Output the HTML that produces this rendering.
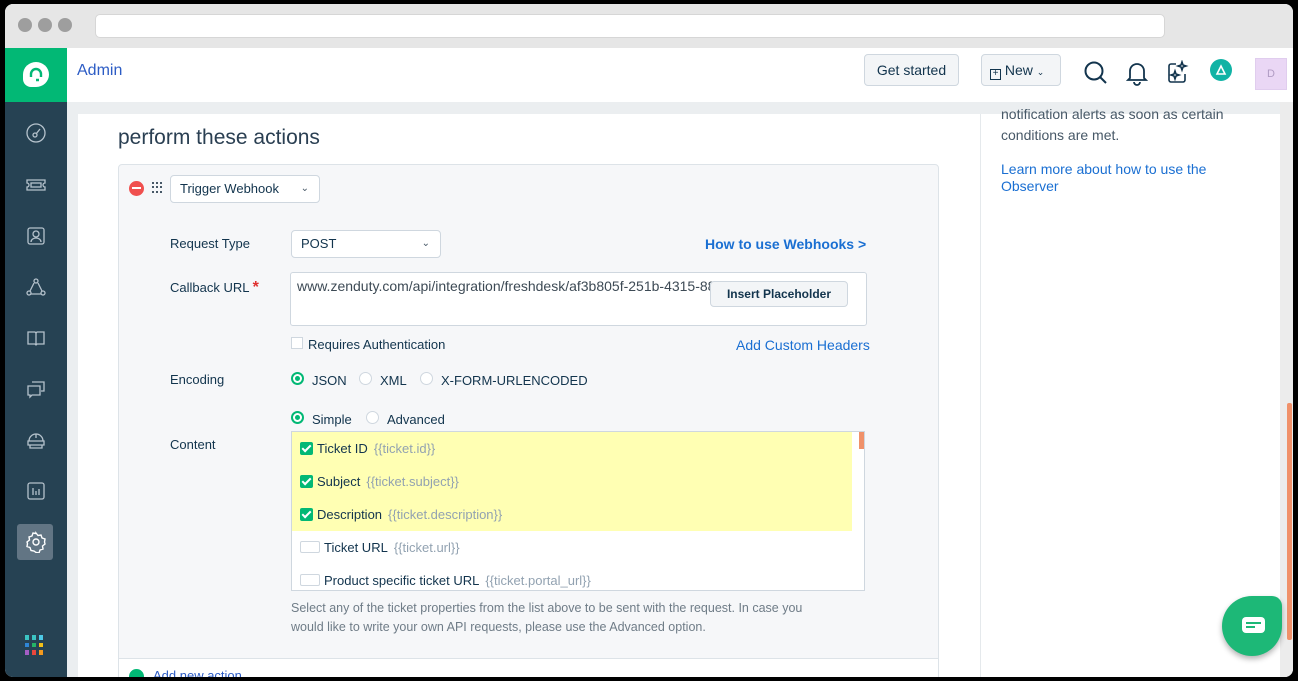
<!DOCTYPE html>
<html><head><meta charset="utf-8"><style>
*{box-sizing:border-box;margin:0;padding:0}
body{width:1298px;height:681px;background:#000;font-family:"Liberation Sans",sans-serif;position:relative;overflow:hidden;color:#12344d}
.win{position:absolute;left:5px;top:4px;width:1288px;height:673px;background:#ebeef0;border-radius:8px;overflow:hidden}
.chrome{position:absolute;left:0;top:0;width:100%;height:44px;background:#e6e6e6}
.dot{position:absolute;top:14px;width:14px;height:14px;border-radius:50%;background:#9e9e9e}
.url{position:absolute;left:90px;top:10px;width:1070px;height:24px;background:#fff;border-radius:5px;border:1px solid #d6d6d6}
.hdr{position:absolute;left:0;top:44px;width:100%;height:54px;background:#fff}
.logo{position:absolute;left:0;top:44px;width:62px;height:54px;background:#02b875}
.side{position:absolute;left:0;top:98px;width:62px;height:580px;background:#264253}
.si{position:absolute;left:20px;width:22px;height:22px}
.btn{position:absolute;border:1px solid #cfd7df;border-radius:4px;background:#f3f5f7;font-size:14px;color:#12344d}
.card{position:absolute;left:73px;top:110px;width:902px;height:570px;background:#fff}
.rp{position:absolute;left:975px;top:110px;width:301px;height:570px;background:#fff;border-left:1px solid #e5e9ec}
.box{position:absolute;left:113px;top:160px;width:821px;height:520px;background:#f6f7f9;border:1px solid #dde3e8;border-radius:4px}
.lbl{position:absolute;font-size:13px;color:#12344d}
.sel{position:absolute;background:#fff;border:1px solid #cfd7df;border-radius:4px;font-size:13px}
.radio{position:absolute;width:13px;height:13px;border-radius:50%;border:1px solid #cfd7df;background:#fff}
.radio.on{border:2px solid #02b875}
.radio.on::after{content:"";position:absolute;left:2px;top:2px;width:5px;height:5px;border-radius:50%;background:#02b875}
.cb{position:absolute;width:13px;height:13px;border-radius:2px;background:#02b875}
.cb::after{content:"";position:absolute;left:4px;top:1px;width:3px;height:7px;border:solid #fff;border-width:0 2px 2px 0;transform:rotate(45deg)}
.ub{position:absolute;width:20px;height:12px;border:1px solid #cfd7df;background:#fff;border-radius:2px}
.it{position:absolute;font-size:13px;color:#12344d}
.it span{color:#92a2b1;margin-left:6px}
.dots{position:absolute;left:33px;top:17px;width:11px;height:11px;display:grid;grid-template-columns:repeat(3,2px);gap:2px}
.dots i{width:2px;height:2px;background:#475867}
</style></head><body>
<div class="win">
<div class="chrome"><div class="dot" style="left:13px"></div><div class="dot" style="left:33px"></div><div class="dot" style="left:53px"></div><div class="url"></div></div>
<div class="hdr">
<div style="position:absolute;left:72px;top:14px;font-size:16px;color:#2c5cc5">Admin</div>
<div class="btn" style="left:859px;top:6px;width:95px;height:32px;line-height:30px;text-align:center">Get started</div>
<div class="btn" style="left:976px;top:6px;width:80px;height:32px;line-height:30px;padding-left:8px"><span style="display:inline-block;width:11px;height:11px;border:1px solid #12344d;font-size:10px;line-height:8px;text-align:center;vertical-align:-1px">+</span> New <span style="font-size:9px">⌄</span></div>
<svg style="position:absolute;left:1078px;top:12px" width="26" height="26" viewBox="0 0 26 26" fill="none" stroke="#12344d" stroke-width="2"><circle cx="11" cy="11" r="8.5"/><path d="M17 17l6 6"/></svg>
<svg style="position:absolute;left:1121px;top:12px" width="22" height="26" viewBox="0 0 22 26" fill="none" stroke="#12344d" stroke-width="1.8"><path d="M4 18V11a7 7 0 0114 0v7l2 2H2z"/><path d="M8 22a3 3 0 006 0"/></svg>
<svg style="position:absolute;left:1161px;top:12px" width="24" height="26" viewBox="0 0 24 26" fill="none" stroke="#12344d" stroke-width="1.6"><path d="M10 4H5a2 2 0 00-2 2v14a2 2 0 002 2h12a2 2 0 002-2v-6"/><path d="M16 2l1 3 3 1-3 1-1 3-1-3-3-1 3-1z"/><path d="M9 11l1 3 3 1-3 1-1 3-1-3-3-1 3-1z"/></svg>
<div style="position:absolute;left:1205px;top:11px;width:22px;height:22px;border-radius:50%;background:#10b3a5"></div>
<svg style="position:absolute;left:1208px;top:14px" width="16" height="16" viewBox="0 0 16 16" fill="none" stroke="#fff" stroke-width="1.6"><path d="M8 4L4 12h8z"/></svg>
<div style="position:absolute;left:1250px;top:10px;width:32px;height:32px;background:#ead7f5;border:1px solid #e0cdee;color:#b19cc4;font-size:11px;text-align:center;line-height:30px">D</div>
</div>
<div class="logo"><div style="position:absolute;left:18px;top:14px;width:26px;height:25px;background:#fff;border-radius:50% 50% 50% 8px / 50% 50% 50% 8px"></div>
<svg style="position:absolute;left:22px;top:17px" width="18" height="18" viewBox="0 0 18 18" fill="none" stroke="#02b875" stroke-width="2.4"><path d="M4 12V9a5 5 0 0110 0v3"/><path d="M9 15h3"/></svg></div>
<div class="side">
<svg class="si" style="top:20px" viewBox="0 0 22 22" fill="none" stroke="#b5c2cc" stroke-width="1.3"><circle cx="11" cy="11" r="9"/><circle cx="10" cy="13" r="2"/><path d="M11 12l4-5"/></svg>
<svg class="si" style="top:72px" viewBox="0 0 22 22" fill="none" stroke="#b5c2cc" stroke-width="1.3"><path d="M2 6h18v3a2 2 0 000 4v3H2v-3a2 2 0 000-4z"/><rect x="6" y="9" width="10" height="4"/></svg>
<svg class="si" style="top:123px" viewBox="0 0 22 22" fill="none" stroke="#b5c2cc" stroke-width="1.3"><rect x="3" y="3" width="16" height="16" rx="2"/><circle cx="11" cy="9" r="3"/><path d="M6 17a5 4 0 0110 0"/></svg>
<svg class="si" style="top:174px" viewBox="0 0 22 22" fill="none" stroke="#b5c2cc" stroke-width="1.3"><circle cx="11" cy="5" r="2"/><circle cx="4" cy="17" r="2"/><circle cx="18" cy="17" r="2"/><path d="M9 7l-4 8M13 7l4 8M6 18h10"/></svg>
<svg class="si" style="top:225px" viewBox="0 0 22 22" fill="none" stroke="#b5c2cc" stroke-width="1.3"><path d="M3 5h7l1 1 1-1h7v12h-7l-1 1-1-1H3z"/><path d="M11 6v11"/></svg>
<svg class="si" style="top:276px" viewBox="0 0 22 22" fill="none" stroke="#b5c2cc" stroke-width="1.3"><path d="M7 4h12v9h-3"/><path d="M3 8h12v9H7l-2 2v-2H3z"/></svg>
<svg class="si" style="top:327px" viewBox="0 0 22 22" fill="none" stroke="#b5c2cc" stroke-width="1.3"><path d="M4 12a7 7 0 0114 0M11 5v4M3 12h16v4H3zM5 16v3h12v-3"/></svg>
<svg class="si" style="top:378px" viewBox="0 0 22 22" fill="none" stroke="#b5c2cc" stroke-width="1.3"><rect x="3" y="3" width="16" height="16" rx="2"/><path d="M8 8v7M11 11v4M14 9v6"/></svg>
<div style="position:absolute;left:12px;top:422px;width:36px;height:36px;border-radius:3px;background:#627584"></div>
<svg class="si" style="top:429px" viewBox="0 0 22 22" fill="none" stroke="#fff" stroke-width="1.4"><circle cx="11" cy="11" r="3"/><path d="M11 2l2 2.5 3-.5 1 3 3 1-.5 3L20 13l-2.5 2 .5 3-3 1-1 3-3-.5L9 20l-3-.5-1-3-3-1 .5-3L2 11l2.5-2L4 6l3-1 1-3 3 .5z"/></svg>
<div style="position:absolute;left:20px;top:533px;width:20px;height:20px;display:grid;grid-template-columns:repeat(3,4px);gap:3px">
<i style="background:#3bc4c3"></i><i style="background:#3bc4c3"></i><i style="background:#4dc9e6"></i><i style="background:#2f86d6"></i><i style="background:#25b567"></i><i style="background:#f3c018"></i><i style="background:#a35ec5"></i><i style="background:#e8473d"></i><i style="background:#f59a1d"></i></div>
</div>
<div class="card">
<div style="position:absolute;left:40px;top:12px;font-size:21px;color:#2a3f52">perform these actions</div>
</div>
<div class="rp">
<div style="position:absolute;left:20px;top:-10px;font-size:14px;color:#475867;line-height:21px">notification alerts as soon as certain<br>conditions are met.</div>
<div style="position:absolute;left:20px;top:47px;font-size:14px;color:#1a6fd2;line-height:17px">Learn more about how to use the<br>Observer</div>
</div>
<div style="position:absolute;left:1275px;top:98px;width:13px;height:580px;background:#ececec"></div>
<div style="position:absolute;left:1282px;top:399px;width:5px;height:237px;background:#f0916a;border-radius:2px"></div>
<div class="box">
<div style="position:absolute;left:10px;top:16px;width:15px;height:15px;border-radius:50%;background:#f0504f"><div style="position:absolute;left:3px;top:6px;width:9px;height:2px;background:#fff"></div></div>
<div class="dots"><i></i><i></i><i></i><i></i><i></i><i></i><i></i><i></i><i></i></div>
<div class="sel" style="left:51px;top:10px;width:150px;height:28px;line-height:26px;padding-left:9px">Trigger Webhook<span style="position:absolute;right:10px;font-size:10px;color:#475867">⌄</span></div>
<div class="lbl" style="left:51px;top:71px">Request Type</div>
<div class="sel" style="left:172px;top:65px;width:150px;height:28px;line-height:26px;padding-left:9px">POST<span style="position:absolute;right:10px;font-size:10px;color:#475867">⌄</span></div>
<div style="position:absolute;left:586px;top:71px;font-size:14px;font-weight:bold;color:#1a6fd2">How to use Webhooks &gt;</div>
<div class="lbl" style="left:51px;top:114px">Callback URL <b style="color:#e0302f;font-size:16px">*</b></div>
<div style="position:absolute;left:171px;top:107px;width:577px;height:54px;background:#fff;border:1px solid #cfd7df;border-radius:3px;overflow:hidden">
<div style="position:absolute;left:6px;top:5px;font-size:14px;color:#3d4a55;white-space:nowrap">www.zenduty.com/api/integration/freshdesk/af3b805f-251b-4315-888b-479b7777b7e7</div>
<div style="position:absolute;left:419px;top:8px;width:138px;height:26px;background:#f3f5f7;border:1px solid #cfd7df;border-radius:4px;font-size:12px;font-weight:bold;text-align:center;line-height:24px;color:#12344d">Insert Placeholder</div></div>
<div style="position:absolute;left:172px;top:172px;width:12px;height:12px;border:1px solid #cfd7df;background:#fff"></div>
<div class="lbl" style="left:189px;top:172px">Requires Authentication</div>
<div style="position:absolute;left:617px;top:172px;font-size:14px;color:#1a6fd2">Add Custom Headers</div>
<div class="lbl" style="left:51px;top:207px">Encoding</div>
<div class="radio on" style="left:172px;top:207px"></div><div class="lbl" style="left:193px;top:208px">JSON</div>
<div class="radio" style="left:240px;top:207px"></div><div class="lbl" style="left:261px;top:208px">XML</div>
<div class="radio" style="left:301px;top:207px"></div><div class="lbl" style="left:322px;top:208px">X-FORM-URLENCODED</div>
<div class="radio on" style="left:172px;top:246px"></div><div class="lbl" style="left:193px;top:247px">Simple</div>
<div class="radio" style="left:247px;top:246px"></div><div class="lbl" style="left:268px;top:247px">Advanced</div>
<div class="lbl" style="left:51px;top:272px">Content</div>
<div style="position:absolute;left:172px;top:266px;width:574px;height:160px;background:#fff;border:1px solid #cfd7df;overflow:hidden">
<div style="position:absolute;left:0;top:0;width:560px;height:99px;background:#ffffb3"></div>
<div style="position:absolute;left:567px;top:0;width:5px;height:17px;background:#f0916a"></div>
<div class="cb" style="left:8px;top:10px"></div><div class="it" style="left:25px;top:9px">Ticket ID<span>{{ticket.id}}</span></div>
<div class="cb" style="left:8px;top:43px"></div><div class="it" style="left:25px;top:42px">Subject<span>{{ticket.subject}}</span></div>
<div class="cb" style="left:8px;top:76px"></div><div class="it" style="left:25px;top:75px">Description<span>{{ticket.description}}</span></div>
<div class="ub" style="left:8px;top:109px"></div><div class="it" style="left:32px;top:108px">Ticket URL<span>{{ticket.url}}</span></div>
<div class="ub" style="left:8px;top:142px"></div><div class="it" style="left:32px;top:141px">Product specific ticket URL<span>{{ticket.portal_url}}</span></div>
</div>
<div style="position:absolute;left:172px;top:434px;font-size:12.5px;color:#6f7c87;line-height:19px">Select any of the ticket properties from the list above to be sent with the request. In case you<br>would like to write your own API requests, please use the Advanced option.</div>
<div style="position:absolute;left:0;top:493px;width:819px;height:30px;background:#fff;border-top:1px solid #dde3e8">
<div style="position:absolute;left:10px;top:10px;width:15px;height:15px;border-radius:50%;background:#02b875"></div>
<div style="position:absolute;left:34px;top:9px;font-size:13px;color:#2c5cc5">Add new action</div></div>
</div>
<div style="position:absolute;left:1217px;top:592px;width:60px;height:60px;background:#1db877;border-radius:50% 10px 50% 50%;box-shadow:0 3px 6px rgba(0,0,0,.3)">
<div style="position:absolute;left:20px;top:21px;width:23px;height:16px;background:#fff;border-radius:4px"><div style="position:absolute;left:4px;top:5px;width:15px;height:2px;background:#1db877"></div><div style="position:absolute;left:4px;top:9px;width:9px;height:2px;background:#1db877"></div></div></div>
</div>
</body></html>
